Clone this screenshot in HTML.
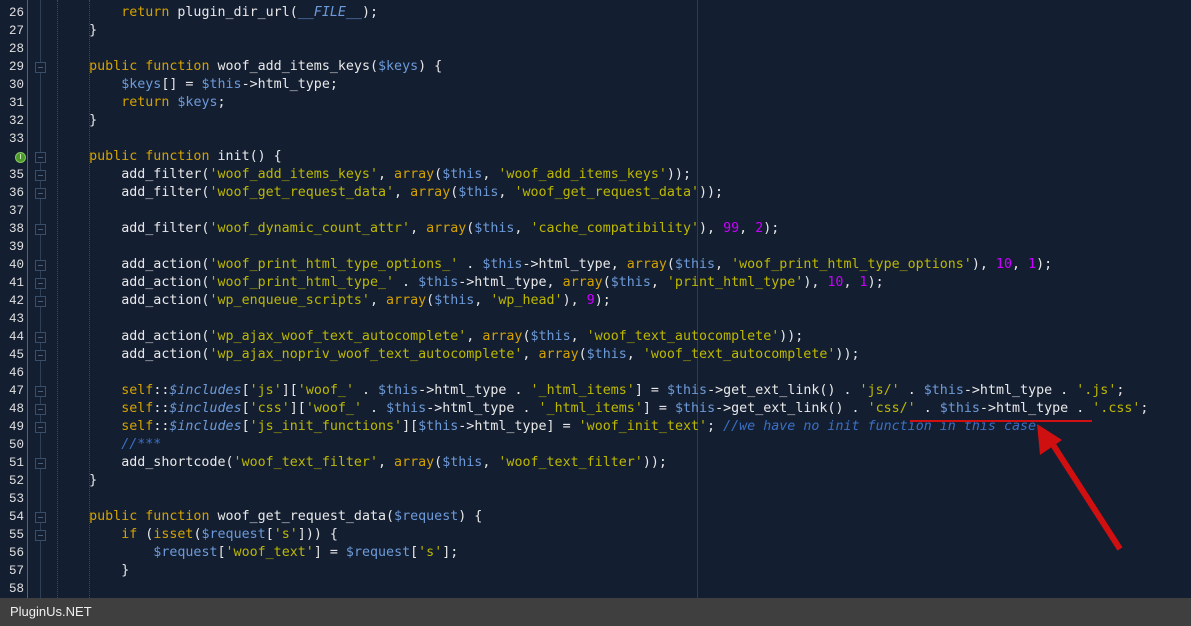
<!DOCTYPE html><html><head><style>
body{margin:0;width:1191px;height:626px;overflow:hidden;background:#131e31;position:relative;font-family:"Liberation Mono",monospace}
.code{position:absolute;left:57px;top:4px;margin:0;font-size:13.33px;line-height:18px;color:#e8e8e8;white-space:pre;font-weight:normal}
.nums{position:absolute;left:0;top:4px;width:24px;text-align:right;font-size:12.5px;line-height:18px;color:#e0e0e0;margin:0;white-space:pre;font-family:"Liberation Mono",monospace}
.k{color:#d4a200}.s{color:#bdb800}.v{color:#6d9ad8}.n{color:#c800ff}.c{color:#3c70c4;font-style:italic}.i{font-style:italic;color:#6d9ad8}
.sep{position:absolute;left:27px;top:0;width:1px;height:598px;background:#5a6270}
.fold{position:absolute;left:40px;top:0;width:1px;height:598px;background:#2e4058}
.g{position:absolute;top:0;width:0;height:598px;border-left:1px dotted #3a4a62}
.box{position:absolute;left:35px;width:9px;height:9px;border:1px solid #3a4e6a;background:#131e31}
.box:after{content:"";position:absolute;left:2px;top:4px;width:5px;height:1px;background:#4a5e7a}
.foot{position:absolute;left:0;top:598px;width:1191px;height:28px;background:#3f3f3f;color:#f0f0f0;font-family:"Liberation Sans",sans-serif;font-size:13px;line-height:28px;padding-left:10px;box-sizing:border-box}
</style></head><body>
<div class="sep"></div><div class="fold"></div>
<div class="g" style="left:57px"></div><div class="g" style="left:89px"></div>
<div style="position:absolute;left:697px;top:0;width:1px;height:598px;background:#2c3c55"></div>
<div class="box" style="top:62px"></div><div class="box" style="top:152px"></div><div class="box" style="top:170px"></div><div class="box" style="top:188px"></div><div class="box" style="top:224px"></div><div class="box" style="top:260px"></div><div class="box" style="top:278px"></div><div class="box" style="top:296px"></div><div class="box" style="top:332px"></div><div class="box" style="top:350px"></div><div class="box" style="top:386px"></div><div class="box" style="top:404px"></div><div class="box" style="top:422px"></div><div class="box" style="top:458px"></div><div class="box" style="top:512px"></div><div class="box" style="top:530px"></div>
<div style="position:absolute;left:15px;top:152px;width:9px;height:9px;border-radius:50%;background:#4a9a2a;border:1px solid #8ac860;color:#fff;font-size:7px;line-height:9px;text-align:center;font-family:'Liberation Sans'">I</div>
<pre class="nums">26
27
28
29
30
31
32
33

35
36
37
38
39
40
41
42
43
44
45
46
47
48
49
50
51
52
53
54
55
56
57
58</pre>
<pre class="code">        <span class="k">return</span> plugin_dir_url(<span class="i">__FILE__</span>);
    }

    <span class="k">public function</span> woof_add_items_keys(<span class="v">$keys</span>) {
        <span class="v">$keys</span>[] = <span class="v">$this</span>-&gt;html_type;
        <span class="k">return</span> <span class="v">$keys</span>;
    }

    <span class="k">public function</span> init() {
        add_filter(<span class="s">'woof_add_items_keys'</span>, <span class="k">array</span>(<span class="v">$this</span>, <span class="s">'woof_add_items_keys'</span>));
        add_filter(<span class="s">'woof_get_request_data'</span>, <span class="k">array</span>(<span class="v">$this</span>, <span class="s">'woof_get_request_data'</span>));

        add_filter(<span class="s">'woof_dynamic_count_attr'</span>, <span class="k">array</span>(<span class="v">$this</span>, <span class="s">'cache_compatibility'</span>), <span class="n">99</span>, <span class="n">2</span>);

        add_action(<span class="s">'woof_print_html_type_options_'</span> . <span class="v">$this</span>-&gt;html_type, <span class="k">array</span>(<span class="v">$this</span>, <span class="s">'woof_print_html_type_options'</span>), <span class="n">10</span>, <span class="n">1</span>);
        add_action(<span class="s">'woof_print_html_type_'</span> . <span class="v">$this</span>-&gt;html_type, <span class="k">array</span>(<span class="v">$this</span>, <span class="s">'print_html_type'</span>), <span class="n">10</span>, <span class="n">1</span>);
        add_action(<span class="s">'wp_enqueue_scripts'</span>, <span class="k">array</span>(<span class="v">$this</span>, <span class="s">'wp_head'</span>), <span class="n">9</span>);

        add_action(<span class="s">'wp_ajax_woof_text_autocomplete'</span>, <span class="k">array</span>(<span class="v">$this</span>, <span class="s">'woof_text_autocomplete'</span>));
        add_action(<span class="s">'wp_ajax_nopriv_woof_text_autocomplete'</span>, <span class="k">array</span>(<span class="v">$this</span>, <span class="s">'woof_text_autocomplete'</span>));

        <span class="k">self</span>::<span class="i">$includes</span>[<span class="s">'js'</span>][<span class="s">'woof_'</span> . <span class="v">$this</span>-&gt;html_type . <span class="s">'_html_items'</span>] = <span class="v">$this</span>-&gt;get_ext_link() . <span class="s">'js/'</span> . <span class="v">$this</span>-&gt;html_type . <span class="s">'.js'</span>;
        <span class="k">self</span>::<span class="i">$includes</span>[<span class="s">'css'</span>][<span class="s">'woof_'</span> . <span class="v">$this</span>-&gt;html_type . <span class="s">'_html_items'</span>] = <span class="v">$this</span>-&gt;get_ext_link() . <span class="s">'css/'</span> . <span class="v">$this</span>-&gt;html_type . <span class="s">'.css'</span>;
        <span class="k">self</span>::<span class="i">$includes</span>[<span class="s">'js_init_functions'</span>][<span class="v">$this</span>-&gt;html_type] = <span class="s">'woof_init_text'</span>; <span class="c">//we have no init function in this case</span>
        <span class="c">//***</span>
        add_shortcode(<span class="s">'woof_text_filter'</span>, <span class="k">array</span>(<span class="v">$this</span>, <span class="s">'woof_text_filter'</span>));
    }

    <span class="k">public function</span> woof_get_request_data(<span class="v">$request</span>) {
        <span class="k">if</span> (<span class="k">isset</span>(<span class="v">$request</span>[<span class="s">'s'</span>])) {
            <span class="v">$request</span>[<span class="s">'woof_text'</span>] = <span class="v">$request</span>[<span class="s">'s'</span>];
        }
</pre>
<svg style="position:absolute;left:0;top:0" width="1191" height="598">
<line x1="910" y1="421" x2="1092" y2="421" stroke="#d01010" stroke-width="2"/>
<line x1="1120" y1="549" x2="1050" y2="440" stroke="#d01010" stroke-width="6"/>
<polygon points="1037,424 1062,440 1040,455" fill="#d01010"/>
</svg>
<div class="foot">PluginUs.NET</div>
</body></html>
